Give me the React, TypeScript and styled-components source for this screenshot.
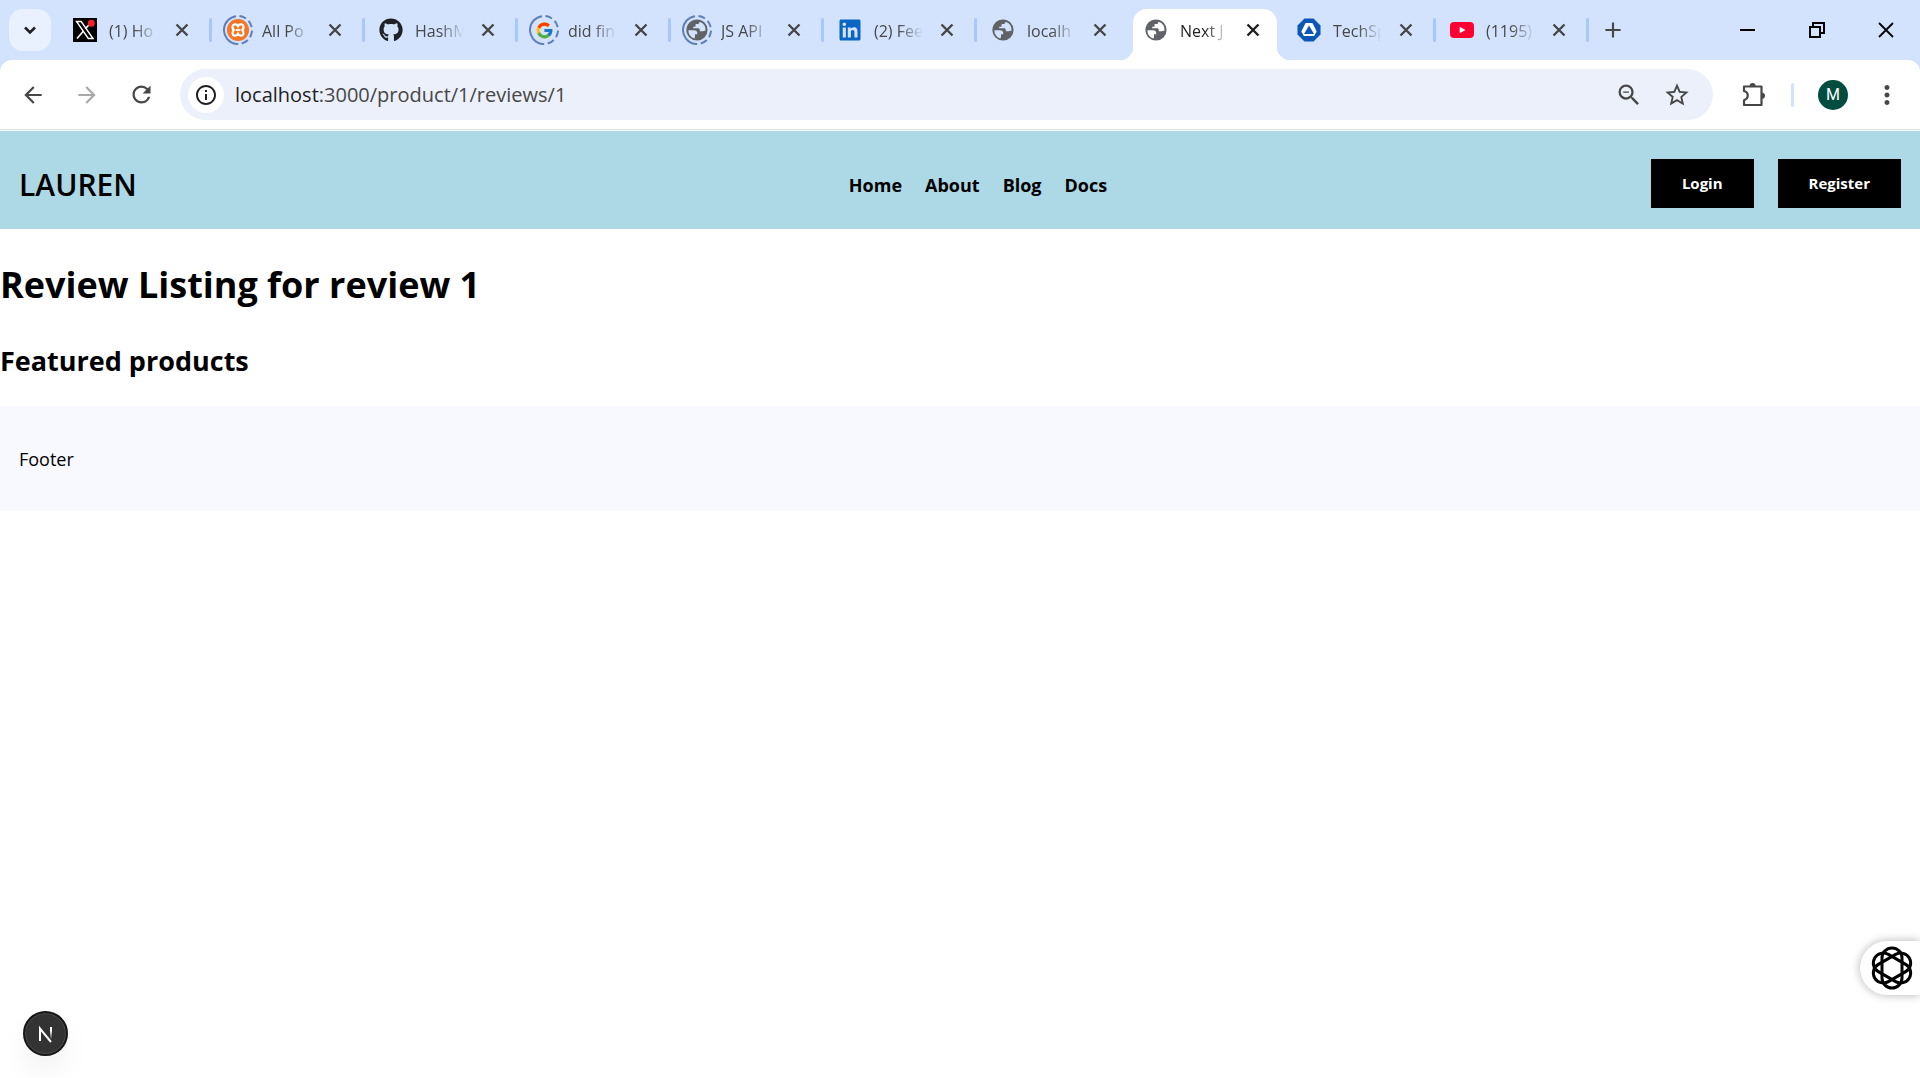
import React from "react";
import styled, { createGlobalStyle, css } from "styled-components";
import { MdAdd, MdArrowBack, MdArrowForward, MdInfoOutline, MdMoreVert, MdOutlineZoomOut, MdRefresh, MdStarBorder } from "react-icons/md";
import { FaGithub, FaLinkedin } from "react-icons/fa";
import { FcGoogle } from "react-icons/fc";

const uiFont = `"Segoe UI", "Open Sans", "Noto Sans", sans-serif`;
const comicFont = `"Comic Sans MS", "Open Sans", "Noto Sans", sans-serif`;

const GlobalStyle = createGlobalStyle`
  *, *::before, *::after { box-sizing: border-box; }
  body { margin: 0; background: #fff; color: #000; font-family: ${uiFont}; }
  button { border: 0; padding: 0; background: none; color: inherit; font: inherit; cursor: pointer; }
  svg { display: block; flex: none; }
`;

const TabStrip = styled.div`
  display: flex;
  align-items: center;
  height: 60px;
  padding-left: 9px;
  background: #d3e3fd;
`;

const TabSearch = styled.button`
  display: grid;
  place-items: center;
  flex: none;
  width: 42px;
  height: 42px;
  margin-right: 6px;
  border-radius: 14px;
  background: #e9f1fe;
  color: #1f1f1f;
`;

const TabList = styled.div`
  display: flex;
  align-self: stretch;
  min-width: 0;
`;

const TabSlot = styled.div<{ $active?: boolean; $divider?: boolean }>`
  position: relative;
  display: flex;
  align-items: center;
  flex: 0 1 auto;
  width: 153px;
  min-width: 0;
  padding: 0 18px 0 13px;
  color: ${(p) => (p.$active ? "#1f1f1f" : "#474747")};
  ${(p) =>
    p.$divider &&
    css`
      &::after {
        content: "";
        position: absolute;
        right: -2px;
        top: 18px;
        width: 3px;
        height: 24px;
        border-radius: 2px;
        background: #a8c7fa;
      }
    `}
`;

const ActiveShape = styled.span`
  position: absolute;
  inset: 9px 4px 0 5px;
  border-radius: 14px 14px 0 0;
  background: #fff;
  &::before,
  &::after {
    content: "";
    position: absolute;
    bottom: 0;
    width: 14px;
    height: 14px;
  }
  &::before {
    right: 100%;
    background: radial-gradient(circle at 0 0, transparent 14px, #fff 15px);
  }
  &::after {
    left: 100%;
    background: radial-gradient(circle at 100% 0, transparent 14px, #fff 15px);
  }
`;

const Favicon = styled.span`
  position: relative;
  display: grid;
  place-items: center;
  flex: none;
  width: 30px;
  height: 30px;
  margin-right: 9px;
`;

const Throbber = styled.svg`
  position: absolute;
  inset: 0;
`;

const TabTitle = styled.span`
  position: relative;
  flex: 1;
  min-width: 0;
  padding-top: 2px;
  overflow: hidden;
  white-space: nowrap;
  font-size: 16px;
  line-height: 24px;
  mask-image: linear-gradient(to right, #000 50%, transparent);
`;

const TabClose = styled.button`
  position: relative;
  display: grid;
  place-items: center;
  flex: none;
  width: 20px;
  height: 20px;
  margin-left: 14px;
`;

const NewTab = styled.button`
  display: grid;
  place-items: center;
  width: 42px;
  height: 42px;
  margin-left: 5px;
  color: #474747;
`;

const WindowControls = styled.div`
  display: flex;
  margin-left: auto;
`;

const WindowButton = styled.button`
  display: grid;
  place-items: center;
  width: 69px;
  height: 58px;
  color: #000;
`;

const ToolbarBack = styled.div`
  background: #d3e3fd;
`;

const Toolbar = styled.div`
  display: flex;
  align-items: center;
  height: 70px;
  padding: 0 6px;
  border-bottom: 1px solid #d6e2e6;
  border-radius: 12px 12px 0 0;
  background: #fff;
`;

const ToolButton = styled.button<{ $muted?: boolean }>`
  display: grid;
  place-items: center;
  flex: none;
  width: 54px;
  height: 42px;
  color: ${(p) => (p.$muted ? "#a9a9a9" : "#474747")};
`;

const AddressBar = styled.div`
  display: flex;
  align-items: center;
  flex: 1;
  min-width: 0;
  height: 51px;
  margin: 0 14px 0 12px;
  padding: 0 12px 0 8px;
  border-radius: 26px;
  background: #ebf0fa;
`;

const SiteInfo = styled.button`
  display: grid;
  place-items: center;
  flex: none;
  width: 36px;
  height: 36px;
  margin-right: 11px;
  border-radius: 50%;
  background: #fff;
  color: #1f1f1f;
`;

const Url = styled.span`
  flex: 1;
  min-width: 0;
  overflow: hidden;
  white-space: nowrap;
  color: #474747;
  font-size: 20px;
  line-height: 28px;
  b {
    font-weight: 400;
    color: #1f1f1f;
  }
`;

const AddressAction = styled.button`
  display: grid;
  place-items: center;
  flex: none;
  width: 48px;
  height: 42px;
  color: #474747;
`;

const ToolDivider = styled.span`
  width: 3px;
  height: 24px;
  margin: 0 24px 0 10px;
  border-radius: 2px;
  background: #d3e3fd;
`;

const Avatar = styled.button`
  display: grid;
  place-items: center;
  width: 30px;
  height: 30px;
  margin-right: 12px;
  border-radius: 50%;
  background: #004d40;
  color: #fff;
  font-family: Roboto, "Open Sans", sans-serif;
  font-size: 16px;
`;

const SiteHeader = styled.header`
  display: flex;
  align-items: center;
  justify-content: space-between;
  margin-top: 1px;
  padding: 28px 19px 21px;
  background: lightblue;
  font-family: ${comicFont};
`;

const Side = styled.div<{ $end?: boolean }>`
  display: flex;
  align-items: center;
  flex: 1;
  gap: 24px;
  justify-content: ${(p) => (p.$end ? "flex-end" : "flex-start")};
`;

const Logo = styled.a`
  padding-top: 2px;
  color: #000;
  font-size: 30px;
  font-weight: 600;
  line-height: 40px;
  text-decoration: none;
`;

const Nav = styled.nav`
  display: flex;
  gap: 23px;
  padding: 2px 0 0 36px;
`;

const NavLink = styled.a`
  color: #000;
  font-size: 18px;
  font-weight: 700;
  line-height: 24px;
  text-decoration: none;
`;

const AuthButton = styled.button`
  padding: 14px 31px;
  background: #000;
  color: #fff;
  font-size: 15px;
  font-weight: 700;
  line-height: 21px;
`;

const Title = styled.h1`
  margin: 28px 0 27px;
  font-size: 36px;
  line-height: 56px;
`;

const Subtitle = styled.h2`
  margin: 0 0 25px;
  font-size: 27px;
  line-height: 41px;
`;

const Footer = styled.footer`
  padding: 41px 19px 39px;
  background: ghostwhite;
  font-size: 18px;
  line-height: 25px;
`;

const DevBadge = styled.button`
  position: fixed;
  left: 23px;
  bottom: 22px;
  display: grid;
  place-items: center;
  width: 45px;
  height: 45px;
  border: 2px solid #171717;
  border-radius: 50%;
  background: #333;
  box-shadow: inset 0 0 0 1px #4a4a4a, 0 16px 32px -8px rgba(0, 0, 0, 0.12);
`;

const SideWidget = styled.button`
  position: fixed;
  right: 0;
  bottom: 83px;
  display: flex;
  align-items: center;
  width: 60px;
  height: 54px;
  padding-left: 9px;
  border-radius: 27px 0 0 27px;
  background: #fff;
  box-shadow: 0 0 10px rgba(0, 0, 0, 0.3);
`;

const Globe = ({ land = "#d3e3fd" }: { land?: string }) => (
  <svg width="22" height="22" viewBox="0 0 22 22">
    <circle cx="11" cy="11" r="10.6" fill="#5f6368" />
    <path
      d="M2.400 11.200h5.400c2.200 0 3.400.9 3.400 2.600v1.400h-2.200v2.600c0 .9-.3 1.400-.8 1.700A8.700 8.700 0 0 1 2.400 11.200z"
      fill={land}
    />
    <path
      d="M13.400 2.700c0 1.500-.8 2.300-2.200 2.300H9.600v1.800c0 .7-.5 1-1.200 1H7.200v1.400h4.600c1.400 0 2 .7 2 1.700v1.300h2.100c1.500 0 2.300-.6 3.700-.8A8.700 8.700 0 0 0 13.400 2.700z"
      fill={land}
    />
  </svg>
);

const XIcon = () => (
  <svg width="24" height="24" viewBox="0 0 24 24">
    <rect width="24" height="24" fill="#000" />
    <path d="M3.500 3.500h4.700L20 20.500h-4.700z" fill="none" stroke="#fff" strokeWidth="1.400" />
    <path d="M19 3.500l-6.600 7.300M10.300 13.300L4 20.500" stroke="#fff" strokeWidth="1.600" />
    <circle cx="18.300" cy="5.200" r="3.500" fill="#f4212e" />
  </svg>
);

const XamppIcon = () => (
  <svg width="22" height="22" viewBox="0 0 22 22">
    <circle cx="11" cy="11" r="11" fill="#f37623" />
    <path
      d="M11 7.200C10.300 5.700 9 5.200 7.600 5.400 5.200 5.700 4.700 8.600 6.700 11 4.700 13.400 5.200 16.300 7.600 16.600c1.400.2 2.700-.3 3.400-1.800.7 1.500 2 2 3.400 1.800 2.400-.3 2.900-3.200.9-5.600 2-2.400 1.500-5.300-.9-5.600C13 5.200 11.700 5.700 11 7.200z"
      fill="none"
      stroke="#fff"
      strokeWidth="2.200"
    />
    <path d="M8.500 11h5" stroke="#fff" strokeWidth="1.800" />
  </svg>
);

const TechIcon = () => (
  <svg width="24" height="24" viewBox="0 0 24 24">
    <path d="M7.500 0.500h9L23.500 7.500v9l-7 7h-9l-7-7v-9z" fill="#0b57b7" />
    <path d="M8.600 5h6.800l4.300 8.600-2.600 4.400H6.900l-2.600-4.400z" fill="#fff" />
    <path d="M12 7.500l5 8.500H7z" fill="#0b57b7" />
  </svg>
);

const YoutubeIcon = () => (
  <svg width="24" height="18" viewBox="0 0 24 18">
    <rect y="1" width="24" height="16" rx="4" fill="#ff0033" />
    <path d="M9.700 5.800v6.400l5.800-3.200z" fill="#fff" />
  </svg>
);

const CloseIcon = () => (
  <svg width="14" height="14" viewBox="0 0 14 14">
    <path d="M1.500 1.500l11 11M12.500 1.500l-11 11" stroke="currentColor" strokeWidth="2.400" />
  </svg>
);

const PuzzleIcon = () => (
  <svg width="26" height="26" viewBox="0 0 26 26">
    <path d="M3 4.500h17.500v18.500H3v-4.800c5-1.600 5-7.800 0-9.200z" fill="none" stroke="#474747" strokeWidth="2.200" strokeLinejoin="round" />
    <path d="M8.600 4a3 3 0 0 1 6 0zM21 10.700a3 3 0 0 1 0 6z" fill="#474747" />
  </svg>
);

type TabData = { title: string; icon: React.ReactNode; loading?: boolean; active?: boolean; divider?: boolean };

const tabs: TabData[] = [
  { title: "(1) Ho", icon: <XIcon />, divider: true },
  { title: "All Po", icon: <XamppIcon />, loading: true, divider: true },
  { title: "HashM", icon: <FaGithub size={24} color="#1f2328" />, divider: true },
  { title: "did fin", icon: <FcGoogle size={19} />, loading: true, divider: true },
  { title: "JS API", icon: <Globe />, loading: true, divider: true },
  { title: "(2) Fee", icon: <FaLinkedin size={24} color="#0a66c2" />, divider: true },
  { title: "localh", icon: <Globe /> },
  { title: "Next J", icon: <Globe land="#fff" />, active: true },
  { title: "TechSp", icon: <TechIcon />, divider: true },
  { title: "(1195)", icon: <YoutubeIcon />, divider: true },
];

const Tab = ({ title, icon, loading, active, divider }: TabData) => (
  <TabSlot $active={active} $divider={divider}>
    {active && <ActiveShape />}
    <Favicon>
      {icon}
      {loading && (
        <Throbber width="30" height="30" viewBox="0 0 30 30">
          <circle cx="15" cy="15" r="14" fill="none" stroke="#5f7fb8" strokeWidth="2" pathLength="100" strokeDasharray="8 4 8 4 8 4 8 4 48 4" transform="rotate(-84 15 15)" />
        </Throbber>
      )}
    </Favicon>
    <TabTitle>{title}</TabTitle>
    <TabClose aria-label={`Close ${title}`}>
      <CloseIcon />
    </TabClose>
  </TabSlot>
);

export default function App() {
  return (
    <>
      <GlobalStyle />
      <TabStrip>
        <TabSearch aria-label="Search tabs">
          <svg width="14" height="9" viewBox="0 0 14 9">
            <path d="M2 1.500l5 5 5-5" fill="none" stroke="currentColor" strokeWidth="2.600" />
          </svg>
        </TabSearch>
        <TabList>
          {tabs.map((tab) => (
            <Tab key={tab.title} {...tab} />
          ))}
        </TabList>
        <NewTab aria-label="New tab">
          <MdAdd size={26} />
        </NewTab>
        <WindowControls>
          <WindowButton aria-label="Minimize">
            <svg width="16" height="16" viewBox="0 0 16 16">
              <path d="M0 8h15" stroke="currentColor" strokeWidth="2" />
            </svg>
          </WindowButton>
          <WindowButton aria-label="Restore">
            <svg width="16" height="16" viewBox="0 0 16 16" fill="none" stroke="currentColor" strokeWidth="2">
              <path d="M1 5h10v10H1zM4 4V1h11v10h-4" />
            </svg>
          </WindowButton>
          <WindowButton aria-label="Close window">
            <svg width="16" height="16" viewBox="0 0 16 16">
              <path d="M1 1l14 14M15 1L1 15" stroke="currentColor" strokeWidth="1.800" />
            </svg>
          </WindowButton>
        </WindowControls>
      </TabStrip>
      <ToolbarBack>
        <Toolbar>
          <ToolButton aria-label="Back">
            <MdArrowBack size={26} />
          </ToolButton>
          <ToolButton aria-label="Forward" $muted>
            <MdArrowForward size={26} />
          </ToolButton>
          <ToolButton aria-label="Reload">
            <MdRefresh size={27} />
          </ToolButton>
          <AddressBar>
            <SiteInfo aria-label="Site information">
              <MdInfoOutline size={24} />
            </SiteInfo>
            <Url>
              <b>localhost</b>:3000/product/1/reviews/1
            </Url>
            <AddressAction aria-label="Zoom">
              <MdOutlineZoomOut size={28} />
            </AddressAction>
            <AddressAction aria-label="Bookmark this page">
              <MdStarBorder size={28} />
            </AddressAction>
          </AddressBar>
          <ToolButton aria-label="Extensions">
            <PuzzleIcon />
          </ToolButton>
          <ToolDivider />
          <Avatar>M</Avatar>
          <ToolButton aria-label="Menu">
            <MdMoreVert size={30} />
          </ToolButton>
        </Toolbar>
      </ToolbarBack>
      <SiteHeader>
        <Side>
          <Logo href="#">LAUREN</Logo>
        </Side>
        <Nav>
          <NavLink href="#">Home</NavLink>
          <NavLink href="#">About</NavLink>
          <NavLink href="#">Blog</NavLink>
          <NavLink href="#">Docs</NavLink>
        </Nav>
        <Side $end>
          <AuthButton>Login</AuthButton>
          <AuthButton>Register</AuthButton>
        </Side>
      </SiteHeader>
      <main>
        <Title>Review Listing for review 1</Title>
        <Subtitle>Featured products</Subtitle>
      </main>
      <Footer>Footer</Footer>
      <DevBadge aria-label="Open Next.js developer tools">
        <svg width="18" height="18" viewBox="0 0 18 18" fill="none" strokeWidth="2">
          <defs>
            <linearGradient id="stem" x1="0" y1="0" x2="0" y2="1">
              <stop offset="0.300" stopColor="#fff" />
              <stop offset="1" stopColor="#fff" stopOpacity="0" />
            </linearGradient>
          </defs>
          <path d="M3 16V3.500L14 17" stroke="#fff" />
          <rect x="13" y="2" width="2" height="12" fill="url(#stem)" />
        </svg>
      </DevBadge>
      <SideWidget aria-label="Open assistant">
        <svg width="46" height="46" viewBox="0 0 46 46" fill="none" stroke="#000" strokeWidth="3">
          {[0, 60, 120].map((angle) => (
            <rect key={angle} x="13" y="3" width="20" height="40" rx="10" transform={`rotate(${angle} 23 23)`} />
          ))}
        </svg>
      </SideWidget>
    </>
  );
}
